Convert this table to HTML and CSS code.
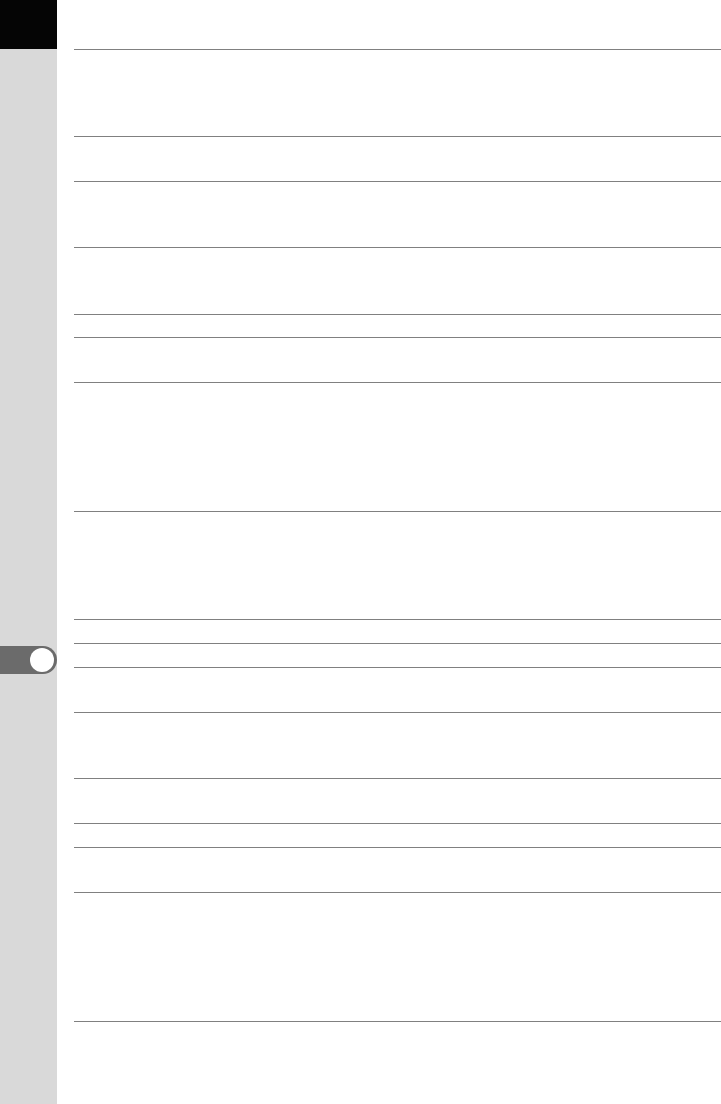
FILE: index.html
```html
<!DOCTYPE html>
<html lang="en">
<head>
  <meta charset="UTF-8">
  <meta name="viewport" content="width=device-width, initial-scale=1.0">
  <title>Manual page</title>
  <link rel="stylesheet" href="styles.css">
</head>
<body>
  <div class="page">
    <!-- Side bar with chapter tab -->
    <aside class="sidebar">
      <div class="corner"></div>
      <div class="tab"><span class="tab-dot"></span></div>
    </aside>

    <!-- Table rows -->
    <main class="content">
      <div class="row h87"></div>
      <div class="row h45"></div>
      <div class="row h66"></div>
      <div class="row h67"></div>
      <div class="row h23"></div>
      <div class="row h45"></div>
      <div class="row h129"></div>
      <div class="row h108"></div>
      <div class="row h24"></div>
      <div class="row h24"></div>
      <div class="row h45"></div>
      <div class="row h66"></div>
      <div class="row h45"></div>
      <div class="row h24"></div>
      <div class="row h45"></div>
      <div class="row h129"></div>
      <div class="row last"></div>
    </main>
  </div>
</body>
</html>
```

FILE: styles.css
```css
* {
  box-sizing: border-box;
}
body {
  margin: 0;
  font-family: "Liberation Sans", Arial, sans-serif;
  background-color: #fff;
}
.page {
  display: flex;
  height: 1104px;
  overflow: hidden;
}
.sidebar {
  width: 57px;
  flex-shrink: 0;
  background-color: #d9d9d9;
}
.corner {
  height: 49px;
  background-color: #050505;
}
.tab {
  display: flex;
  align-items: center;
  justify-content: flex-end;
  margin-top: 597px;
  height: 28px;
  padding-right: 3px;
  background-color: #6b6b6b;
  border-radius: 0 14px 14px 0;
}
.tab-dot {
  width: 24px;
  height: 24px;
  border-radius: 50%;
  background-color: #fff;
}
.content {
  flex: 1;
  padding-top: 49px;
  padding-left: 17px;
}
.row {
  border-top: 1px solid #808080;
}
.h23 { height: 23px; }
.h24 { height: 24px; }
.h45 { height: 45px; }
.h66 { height: 66px; }
.h67 { height: 67px; }
.h87 { height: 87px; }
.h108 { height: 108px; }
.h129 { height: 129px; }
.last { height: 1px; }
```
